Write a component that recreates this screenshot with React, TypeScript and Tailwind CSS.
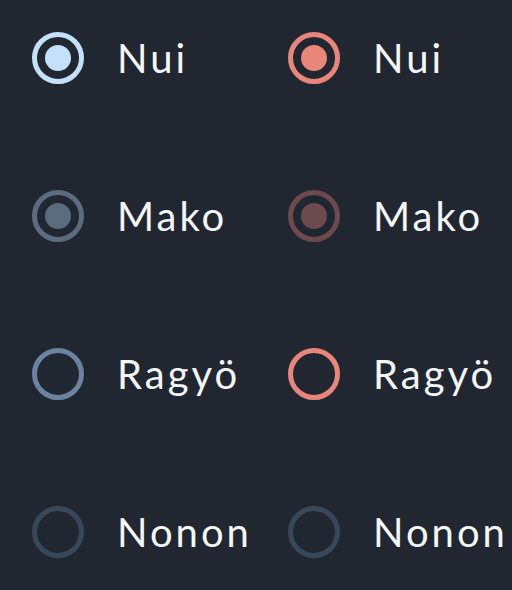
const rows = [
  { label: "Nui", kind: "checked" },
  { label: "Mako", kind: "disabled" },
  { label: "Ragyö", kind: "unchecked" },
  { label: "Nonon", kind: "off" },
];

const blue = {
  checked: { ring: "border-[#c4e1fb]", dot: "bg-[#c4e1fb]" },
  disabled: { ring: "border-[#5b6c7e]", dot: "bg-[#5b6c7e]" },
  unchecked: { ring: "border-[#6a83a1]", dot: "" },
  off: { ring: "border-[#394859]", dot: "" },
};

const red = {
  checked: { ring: "border-[#e8867c]", dot: "bg-[#e8867c]" },
  disabled: { ring: "border-[#6c4a4e]", dot: "bg-[#6c4a4e]" },
  unchecked: { ring: "border-[#e8867c]", dot: "" },
  off: { ring: "border-[#394859]", dot: "" },
};

const Radio = ({ ring, dot }: { ring: string; dot: string }) => (
  <div
    className={`flex h-[52px] w-[52px] shrink-0 items-center justify-center rounded-full border-[5px] ${ring}`}
  >
    {dot && <div className={`h-[26px] w-[26px] rounded-full ${dot}`} />}
  </div>
);

const Column = ({ palette }: { palette: typeof blue }) => (
  <div className="flex flex-col gap-[106px] pl-[32px]">
    {rows.map((r) => {
      const c = palette[r.kind as keyof typeof blue];
      return (
        <div key={r.label} className="flex h-[52px] items-center gap-[33px]">
          <Radio ring={c.ring} dot={c.dot} />
          <span className="whitespace-nowrap text-[40px] leading-none tracking-[0.075em] text-[#f4f6f8]">
            {r.label}
          </span>
        </div>
      );
    })}
  </div>
);

export default function App() {
  return (
    <div
      className="grid h-[590px] w-[512px] grid-cols-[256px_256px] overflow-hidden bg-[#212731] pt-[32px]"
      style={{ fontFamily: "Lato, 'Open Sans', sans-serif" }}
    >
      <Column palette={blue} />
      <Column palette={red} />
    </div>
  );
}
